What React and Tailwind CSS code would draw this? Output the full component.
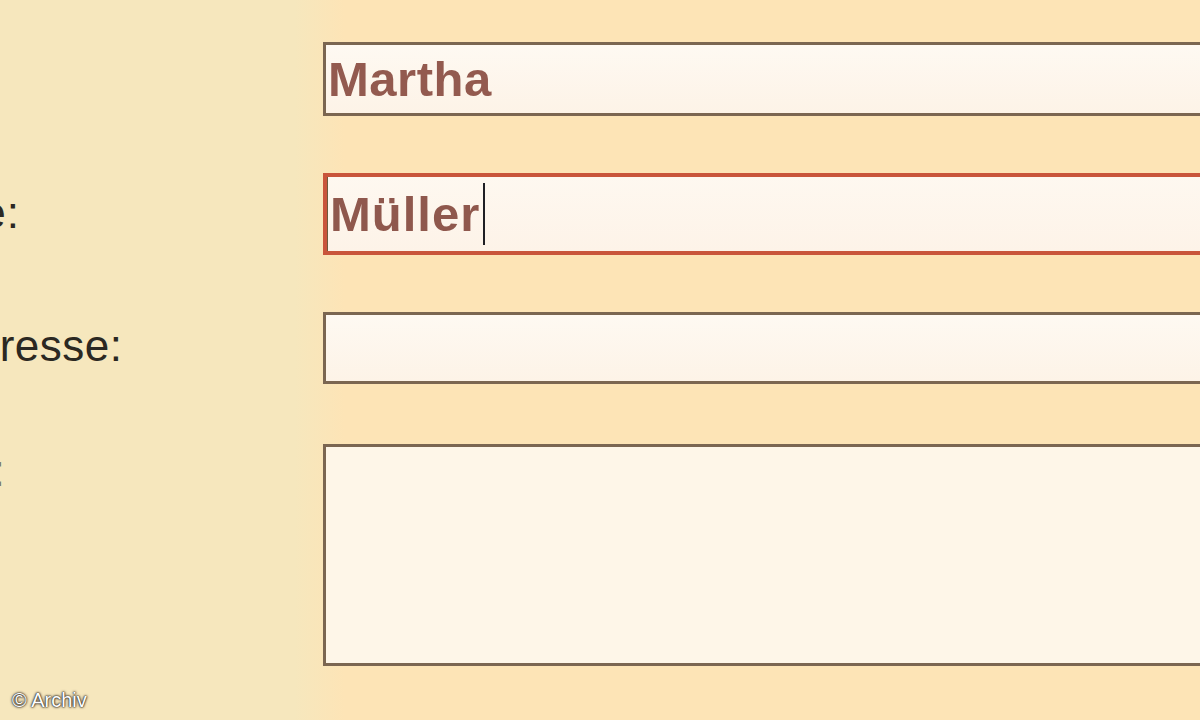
export default function App() {
  const label = "whitespace-nowrap text-[44px] leading-[1.15] text-[#2b2822] font-['Liberation_Sans',Arial,sans-serif]";
  const field = "w-[960px] shrink-0 border-[3px] border-[#7b6651] bg-[linear-gradient(to_bottom,#fef9f2,#fdf3e7)]";
  return (
    <div className="relative w-[1200px] h-[720px] overflow-hidden bg-[linear-gradient(to_right,#f6e7bd_295px,#fde4b6_345px)] font-['Liberation_Sans',Arial,sans-serif]">
      <div className="flex flex-col pt-[42px]">
        <div className="flex h-[74px]">
          <div className="w-[323px] shrink-0 overflow-hidden flex items-center">
            <span className={`${label} ml-[-215px]`}>Vorname:</span>
          </div>
          <div className={`${field} flex items-center pl-[2px]`}>
            <span className="text-[49px] font-bold text-[#935a4f] leading-none tracking-[0.5px]">Martha</span>
          </div>
        </div>
        <div className="flex h-[82px] mt-[57px]">
          <div className="w-[323px] shrink-0 overflow-hidden flex items-center">
            <span className={`${label} ml-[-214px] -mt-[2px] tracking-[1px]`}>Nachname:</span>
          </div>
          <div className="w-[960px] shrink-0 border-4 border-[#c9553b] bg-[linear-gradient(to_bottom,#fef8f0,#fdf3e8)] flex items-center pl-[3px] shadow-[inset_1px_0_0_#6d5a3c]">
            <span className="text-[49px] font-bold text-[#8f584d] leading-none tracking-[1px]">Müller</span>
            <span className="ml-[3px] w-[2px] h-[62px] bg-[#1f1f24]"></span>
          </div>
        </div>
        <div className="flex h-[72px] mt-[57px]">
          <div className="w-[323px] shrink-0 overflow-hidden flex items-center">
            <span className={`${label} ml-[-198px] -mt-[4px] tracking-[0.5px]`}>E-Mail-Adresse:</span>
          </div>
          <div className={field}></div>
        </div>
        <div className="flex h-[222px] mt-[60px]">
          <div className="w-[323px] shrink-0 overflow-hidden">
            <span className={`${label} block ml-[-193px] mt-[2px] text-[#2d2a24]/60`}>Nachricht:</span>
          </div>
          <div className="w-[960px] shrink-0 border-[3px] border-[#7b6651] bg-[#fef6e8]"></div>
        </div>
      </div>
      <div className="absolute left-[12px] top-[685px] text-[20px] text-white [text-shadow:0_0_3px_#2e271f,0_0_2px_#2e271f,0_0_1px_#2e271f]">© Archiv</div>
    </div>
  );
}
